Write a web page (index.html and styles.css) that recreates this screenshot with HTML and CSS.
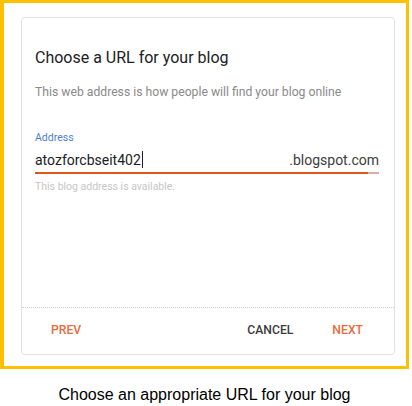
FILE: index.html
```html
<!DOCTYPE html>
<html lang="en">
<head>
    <meta charset="UTF-8">
    <title>Choose a URL</title>
    <link rel="stylesheet" href="styles.css">
</head>
<body>
    <div class="frame">
        <div class="card">
            <div class="card-body">
                <h2 class="title">Choose a URL for your blog</h2>
                <p class="subtitle">This web address is how people will find your blog online</p>

                <div class="field-group">
                    <label class="field-label" for="address">Address</label>
                    <div class="field">
                        <span class="field-value">atozforcbseit402<span class="caret"></span></span>
                        <span class="field-suffix">.blogspot.com</span>
                    </div>
                    <div class="field-line"></div>
                    <p class="helper">This blog address is available.</p>
                </div>
            </div>
            <div class="card-footer">
                <button class="btn btn-accent">PREV</button>
                <div class="spacer"></div>
                <button class="btn">CANCEL</button>
                <button class="btn btn-accent btn-next">NEXT</button>
            </div>
        </div>
    </div>
    <p class="caption">Choose an appropriate URL for your blog</p>
</body>
</html>
```

FILE: styles.css
```css
body {
    margin: 0;
    background: #fff;
    font-family: Roboto, "Liberation Sans", sans-serif;
}

.frame {
    box-sizing: border-box;
    width: 409px;
    height: 369px;
    border: 3px solid #ffc000;
    border-left-width: 4px;
    padding: 14px 11px 11px 17px;
    display: flex;
}

.card {
    flex: 1;
    display: flex;
    flex-direction: column;
    border: 1px solid #e2e2e2;
    border-radius: 4px;
}

.card-body {
    flex: 1;
    padding: 0 13px;
}

.title {
    margin: 30px 0 0;
    font-size: 16px;
    font-weight: 400;
    color: #202124;
    line-height: 20px;
}

.subtitle {
    margin: 16px 0 0;
    font-size: 12.2px;
    color: #8a8a8a;
    line-height: 16px;
}

.field-group {
    padding-right: 2px;
}

.field-label {
    display: block;
    margin-top: 32px;
    font-size: 10.5px;
    color: #4a7fd4;
    line-height: 12px;
}

.field {
    display: flex;
    justify-content: space-between;
    margin-top: 7px;
    font-size: 14px;
    line-height: 18px;
    color: #202124;
}

.caret {
    display: inline-block;
    width: 1px;
    height: 17px;
    margin-left: 1px;
    background: #202124;
    vertical-align: -3px;
}

.field-suffix {
    color: #3c3c3c;
}

.field-line {
    margin-top: 3px;
    height: 2px;
    background: linear-gradient(to right, #e0561f 0, #e0561f 333px, #d9b0a0 333px);
}

.helper {
    margin: 7px 0 0;
    font-size: 10.5px;
    color: #c6c6c6;
    line-height: 12px;
}

.card-footer {
    height: 47px;
    border-top: 1px dotted #d0d0d0;
    display: flex;
    align-items: center;
    padding: 0 31px 3px 29px;
    box-sizing: border-box;
}

.spacer {
    flex: 1;
}

.btn {
    border: none;
    background: none;
    padding: 0;
    font-family: Roboto, "Liberation Sans", sans-serif;
    font-size: 12.2px;
    font-weight: 500;
    color: #3c3c3c;
}

.btn-accent {
    color: #ea6b3c;
}

.btn-next {
    margin-left: 39px;
}

.caption {
    width: 409px;
    margin: 17px 0 0;
    text-align: center;
    font-family: "Liberation Sans", Arial, sans-serif;
    font-size: 16px;
    color: #000;
}
```
